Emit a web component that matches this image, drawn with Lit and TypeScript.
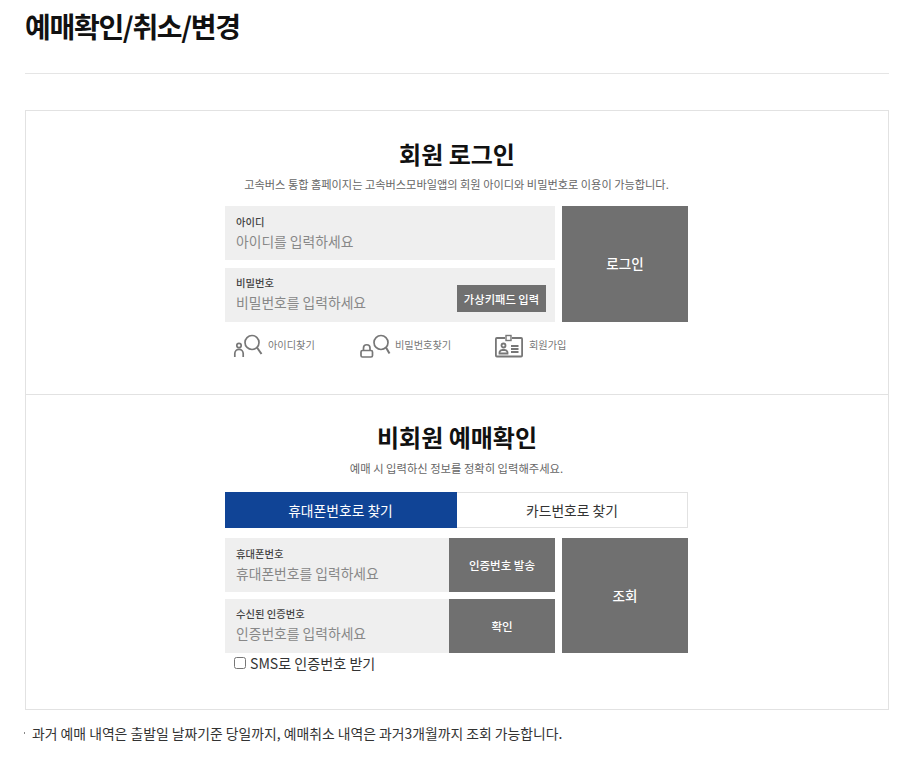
import { LitElement, html, css } from 'lit';
import { customElement } from 'lit/decorators.js';

const findIdIcon = html`<svg width="30" height="24" viewBox="0 0 30 24" fill="none" stroke="#777" stroke-width="1.7">
  <circle cx="19" cy="8.500" r="7"/><path d="M24 13.500 L28.500 20" stroke-width="2"/>
  <circle cx="6" cy="11.500" r="2.200"/><path d="M1.800 23v-3.500a4 4 0 0 1 8.400 0V23"/></svg>`;
const findPwIcon = html`<svg width="30" height="24" viewBox="0 0 30 24" fill="none" stroke="#777" stroke-width="1.7">
  <circle cx="21" cy="8.500" r="7"/><path d="M26 13.500 L29.500 19.500" stroke-width="2"/>
  <rect x="1" y="16.500" width="11.500" height="6.500" rx="1.500"/><path d="M3.500 16.500v-2.500a3.200 3.200 0 0 1 6.500 0v2.500"/></svg>`;
const joinIcon = html`<svg width="29" height="24" viewBox="0 0 29 24" fill="none" stroke="#777" stroke-width="1.8">
  <path d="M10 4H1.900a1 1 0 0 0-1 1v16.500a1 1 0 0 0 1 1h24.200a1 1 0 0 0 1-1V5a1 1 0 0 0-1-1H17"/>
  <rect x="11" y="1.500" width="5" height="5" stroke-width="1.400"/>
  <circle cx="8.500" cy="11.500" r="2"/><path d="M4.500 19.500v-1.500a3 3 0 0 1 3-2h2a3 3 0 0 1 3 2v1.500z"/>
  <path d="M16 12h7.500M16 15h7.500M16 18h7.500"/></svg>`;

@customElement('app-root')
export class AppRoot extends LitElement {
  static styles = css`
    :host {
      display: block;
      padding: 0 19px 0 25px;
      font-family: "Noto Sans CJK KR", "Noto Sans", sans-serif;
      color: #111;
    }
    h1 {
      margin: 0;
      height: 74px;
      padding-top: 6px;
      box-sizing: border-box;
      font-size: 28px;
      line-height: 40px;
      font-weight: 700;
      letter-spacing: -1.300px;
      border-bottom: 1px solid #e5e5e5;
    }
    .box {
      margin-top: 36px;
      border: 1px solid #e2e2e2;
      height: 600px;
      box-sizing: border-box;
    }
    .sec {
      display: flex;
      flex-direction: column;
      align-items: center;
    }
    .sec.login {
      height: 284px;
      padding-top: 25px;
      box-sizing: border-box;
      border-bottom: 1px solid #e2e2e2;
    }
    .sec.guest { padding-top: 24px; }
    h2 {
      margin: 0;
      font-size: 24px;
      line-height: 36px;
      font-weight: 700;
    }
    .desc {
      margin: 2px 1px 0 0;
      font-size: 11.200px;
      line-height: 20px;
      color: #666;
    }
    .guest .desc { margin-top: 3px; font-size: 11.300px; }
    .form { width: 463px; margin-right: 1px; }
    .login .form { margin-top: 12px; }
    .guest .form { margin-top: 14px; }
    .grid {
      display: grid;
      grid-template-columns: 330px 126px;
      column-gap: 7px;
    }
    .rows {
      display: flex;
      flex-direction: column;
      gap: 7px;
    }
    .login .rows { gap: 8px; }
    .field {
      display: flex;
      height: 54px;
      background: #efefef;
    }
    .field .in {
      flex: 1;
      min-width: 0;
      padding: 8px 11px 0;
      display: flex;
      flex-direction: column;
    }
    .field + .field .in { padding-top: 7px; }
    .lbl {
      font-size: 10.300px;
      line-height: 16px;
      font-weight: 500;
      color: #444;
    }
    input.txt {
      border: 0;
      padding: 0;
      margin: 1px 0 0;
      background: transparent;
      font: inherit;
      font-size: 13.800px;
      line-height: 20px;
      height: 20px;
      outline: none;
      width: 100%;
    }
    input.txt::placeholder { color: #888; opacity: 1; }
    .gray {
      border: 0;
      padding: 0;
      background: #707070;
      color: #fff;
      font: inherit;
    }
    .go { font-size: 13.500px; font-weight: 500; padding-bottom: 2px; }
    .side { width: 106px; flex: none; font-size: 11.500px; font-weight: 500; padding-bottom: 1px; }
    .keypad {
      align-self: flex-end;
      flex: none;
      width: 89px;
      height: 27px;
      margin: 0 9px 10px 0;
      font-size: 11.300px;
      font-weight: 500;
    }
    .links {
      display: grid;
      grid-template-columns: 127px 135px auto;
      margin: 12px 0 0 8px;
      height: 24px;
      align-items: center;
    }
    .links a {
      display: flex;
      align-items: center;
      gap: 5px;
      font-size: 10.200px;
      color: #777;
      text-decoration: none;
    }
    .links a svg { flex: none; overflow: visible; }
    .links a span { margin-top: -3px; }
    .tabs {
      display: grid;
      grid-template-columns: 232px 231px;
      height: 36px;
      margin-bottom: 10px;
      font-size: 13.800px;
      line-height: 34px;
      text-align: center;
    }
    .tab { border: 1px solid #e2e2e2; border-left: 0; color: #333; }
    .tab.on { background: #104496; border-color: #104496; color: #fff; }
    .sms {
      display: flex;
      align-items: center;
      height: 20px;
      font-size: 14.100px;
      color: #333;
    }
    .sms input { margin: 0 4px 0 9px; width: 12px; height: 12px; }
    .note {
      margin: 13px 0 0;
      font-size: 13.850px;
      line-height: 20px;
      color: #333;
      display: flex;
      align-items: center;
    }
    .dot {
      width: 1px;
      height: 2px;
      background: #888;
      margin: 0 7px 0 -1px;
    }
  `;

  field(label: string, ph: string, extra?: unknown) {
    return html`<div class="field">
      <div class="in"><span class="lbl">${label}</span><input class="txt" placeholder=${ph}></div>
      ${extra}
    </div>`;
  }

  render() {
    return html`
      <h1>예매확인/취소/변경</h1>
      <div class="box">
        <section class="sec login">
          <h2>회원 로그인</h2>
          <p class="desc">고속버스 통합 홈페이지는 고속버스모바일앱의 회원 아이디와 비밀번호로 이용이 가능합니다.</p>
          <div class="form">
            <div class="grid">
              <div class="rows">
                ${this.field('아이디', '아이디를 입력하세요')}
                ${this.field('비밀번호', '비밀번호를 입력하세요', html`<button class="gray keypad">가상키패드 입력</button>`)}
              </div>
              <button class="gray go">로그인</button>
            </div>
            <div class="links">
              <a href="#">${findIdIcon}<span>아이디찾기</span></a>
              <a href="#">${findPwIcon}<span>비밀번호찾기</span></a>
              <a href="#">${joinIcon}<span>회원가입</span></a>
            </div>
          </div>
        </section>
        <section class="sec guest">
          <h2>비회원 예매확인</h2>
          <p class="desc">예매 시 입력하신 정보를 정확히 입력해주세요.</p>
          <div class="form">
            <div class="tabs">
              <div class="tab on">휴대폰번호로 찾기</div>
              <div class="tab">카드번호로 찾기</div>
            </div>
            <div class="grid">
              <div class="rows">
                ${this.field('휴대폰번호', '휴대폰번호를 입력하세요', html`<button class="gray side">인증번호 발송</button>`)}
                ${this.field('수신된 인증번호', '인증번호를 입력하세요', html`<button class="gray side">확인</button>`)}
              </div>
              <button class="gray go">조회</button>
            </div>
            <label class="sms"><input type="checkbox">SMS로 인증번호 받기</label>
          </div>
        </section>
      </div>
      <p class="note"><span class="dot"></span>과거 예매 내역은 출발일 날짜기준 당일까지, 예매취소 내역은 과거3개월까지 조회 가능합니다.</p>
    `;
  }
}
